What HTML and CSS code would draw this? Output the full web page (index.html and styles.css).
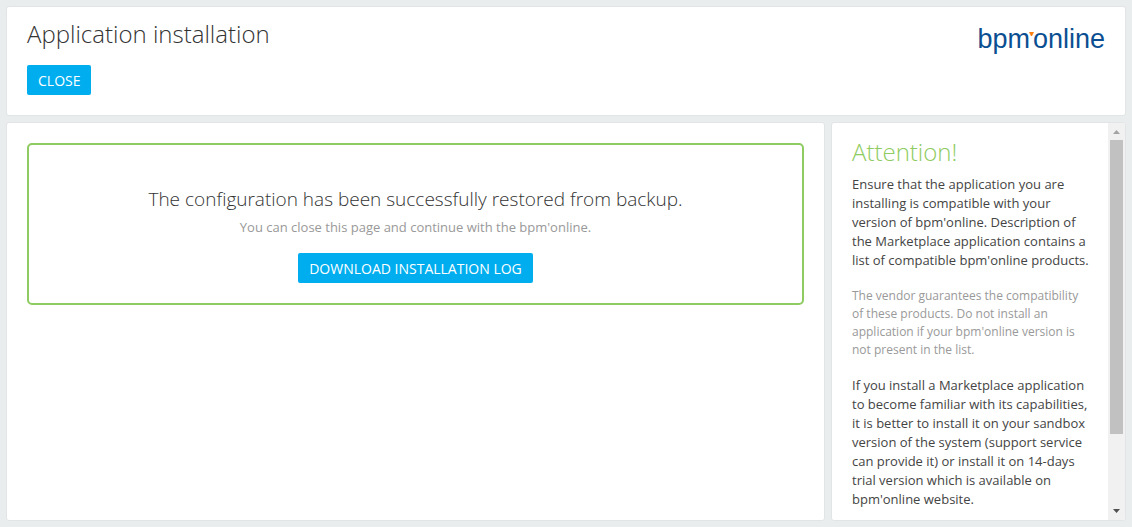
FILE: index.html
```html
<!DOCTYPE html>
<html lang="en">
<head>
<meta charset="utf-8">
<title>Application installation</title>
<link rel="stylesheet" href="styles.css">
</head>
<body>
<div class="page">
  <header class="panel header">
    <div class="header-main">
      <h1 class="title">Application installation</h1>
      <button class="button" type="button">CLOSE</button>
    </div>
    <div class="logo">bpm<svg class="logo-mark" viewBox="0 0 5 4" aria-hidden="true"><path d="M0 0h5L3 4H2z" fill="#ff7f11"/></svg>online</div>
  </header>
  <div class="columns">
    <main class="panel content">
      <section class="result">
        <h2 class="result-title">The configuration has been successfully restored from backup.</h2>
        <p class="result-note">You can close this page and continue with the bpm'online.</p>
        <button class="button" type="button">DOWNLOAD INSTALLATION LOG</button>
      </section>
    </main>
    <aside class="panel side">
      <div class="side-text">
        <h2 class="side-title">Attention!</h2>
        <p class="text">Ensure that the application you are installing is compatible with your version of bpm'online. Description of the Marketplace application contains a list of compatible bpm'online products.</p>
        <p class="text hint">The vendor guarantees the compatibility of these products. Do not install an application if your bpm'online version is not present in the list.</p>
        <p class="text">If you install a Marketplace application to become familiar with its capabilities, it is better to install it on your sandbox version of the system (support service can provide it) or install it on 14-days trial version which is available on bpm'online website.</p>
      </div>
      <div class="scrollbar" aria-hidden="true">
        <svg class="arrow" viewBox="0 0 17 17"><path d="M5 11l3.500-4 3.500 4z" fill="#a3a3a3"/></svg>
        <div class="track"><div class="thumb"></div></div>
        <svg class="arrow" viewBox="0 0 17 17"><path d="M5 6l3.500 4 3.500-4z" fill="#505050"/></svg>
      </div>
    </aside>
  </div>
</div>
</body>
</html>
```
FILE: styles.css
```css
* { box-sizing: border-box; }
body {
  margin: 0;
  background: #e9eded;
  color: #444;
  font-family: "Open Sans", sans-serif;
  font-size: 13px;
}
h1, h2, p { margin: 0; font-weight: 300; }
.page {
  display: flex;
  flex-direction: column;
  gap: 6px;
  height: 100vh;
  padding: 6px;
}
.panel {
  background: #fff;
  border: 1px solid #e2e5e5;
  border-radius: 3px;
}
.header {
  display: flex;
  justify-content: space-between;
  align-items: flex-start;
  padding: 10px 20px 20px;
}
.title {
  margin-bottom: 14px;
  color: #333;
  font-size: 24px;
  line-height: 34px;
}
.button {
  height: 30px;
  padding: 0 11px;
  border: 0;
  border-radius: 2px;
  background: #00aeef;
  color: #fff;
  font: 14px "Open Sans", sans-serif;
}
.logo {
  display: flex;
  align-items: center;
  color: #0b4f92;
  font-family: "Liberation Sans", sans-serif;
  font-size: 27px;
  line-height: 44px;
}
.logo-mark { width: 5px; height: 4px; margin: 0 -1px 10px; }
.columns {
  display: flex;
  flex: 1;
  gap: 6px;
  min-height: 0;
}
.content { flex: 1; padding: 20px; }
.result {
  padding: 41px 20px 20px;
  border: 2px solid #8ecb60;
  border-radius: 5px;
  text-align: center;
}
.result-title { color: #333; font-size: 19px; line-height: 26px; }
.result-note {
  margin: 5px 0 16px;
  color: #999;
  font-weight: 400;
  line-height: 20px;
}
.side {
  display: flex;
  width: 295px;
  overflow: hidden;
}
.side-text { flex: 1; padding: 12px 16px 0 20px; overflow: hidden; }
.side-title {
  margin-bottom: 6px;
  color: #8ecb60;
  font-size: 24px;
  line-height: 34px;
}
.text {
  margin-bottom: 17px;
  font-weight: 400;
  line-height: 19px;
}
.hint { color: #999; font-size: 12px; line-height: 18px; }
.scrollbar {
  display: flex;
  flex-direction: column;
  width: 17px;
  background: #f1f1f1;
}
.arrow { width: 17px; height: 17px; }
.track { flex: 1; padding: 0 2px; }
.thumb { height: 81%; background: #c1c1c1; }
```
